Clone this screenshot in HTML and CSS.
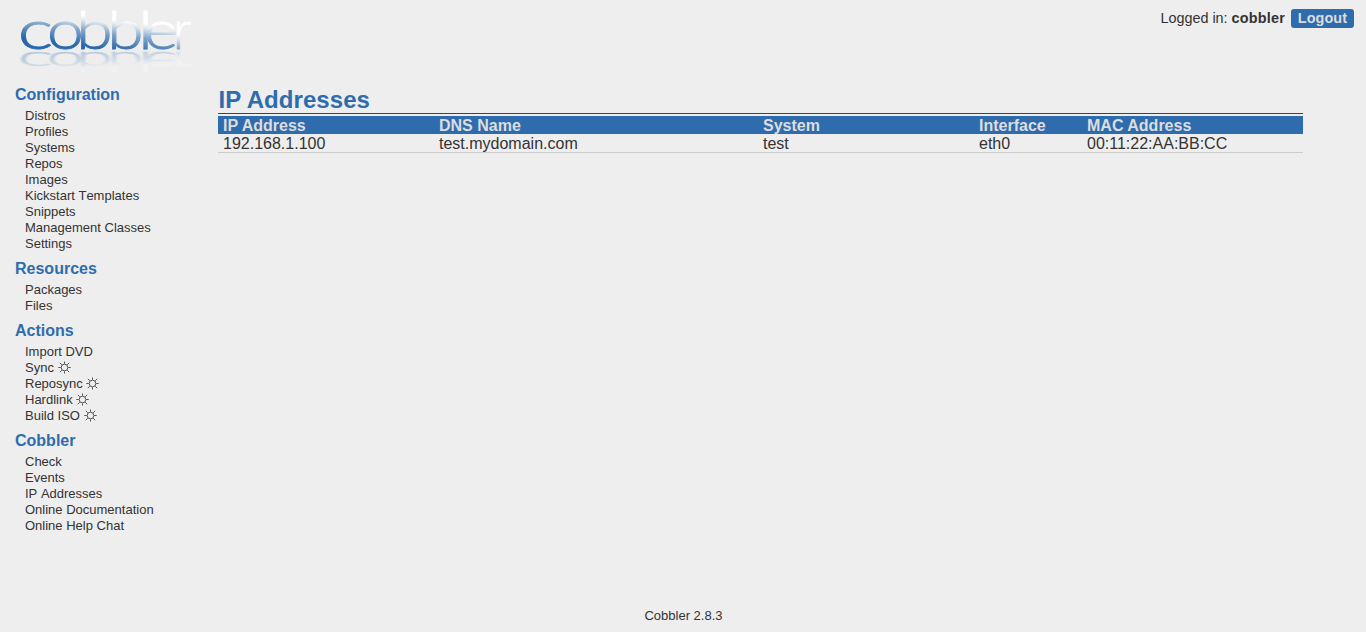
FILE: index.html
```html
<!DOCTYPE html>
<html lang="en">
<head>
<meta charset="utf-8">
<title>Cobbler Web Interface</title>
<link rel="stylesheet" href="styles.css">
</head>
<body>
<div class="page">
  <header class="header">
    <svg class="logo" width="200" height="76" viewBox="0 0 200 76" role="img" aria-label="cobbler">
      <defs>
        <linearGradient id="ink" gradientUnits="userSpaceOnUse" x1="86" y1="-33" x2="81" y2="-2">
          <stop offset="0" stop-color="#fff"/>
          <stop offset=".15" stop-color="#dfe8f1"/>
          <stop offset=".5" stop-color="#7da1c9"/>
          <stop offset="1" stop-color="#2768ac"/>
        </linearGradient>
        <filter id="soft"><feGaussianBlur stdDeviation="1"/></filter>
        <symbol id="gear" viewBox="0 0 13 13">
          <circle cx="6.5" cy="6.5" r="3.3"/>
          <path d="M6.5 .5v2.3M6.5 10.2v2.3M.3 6.5h2.5M10.2 6.5h2.5M1.8 1.8l2 2M9.2 9.2l2 2M11.2 1.8l-2 2M3.8 9.2l-2 2"/>
        </symbol>
      </defs>
      <g id="wordmark" class="wordmark">
        <g transform="translate(0 49) scale(1.34 .94)"><text x="13.2" y="0">c</text></g>
        <g transform="translate(0 49) scale(1.18 .94)"><text y="0" x="39.9 64.6 90.9 117.2 122.1">obble</text></g>
        <g transform="translate(0 49) scale(.92 .94)"><text x="188" y="0">r</text></g>
      </g>
      <use href="#wordmark" class="reflection" transform="translate(0 78) scale(1 -.53)" filter="url(#soft)"/>
    </svg>
    <div class="user">Logged in: <strong class="name">cobbler</strong><a class="logout">Logout</a></div>
  </header>
  <div class="columns">
    <nav class="menu">
      <h2>Configuration</h2>
      <ul><li>Distros</li><li>Profiles</li><li>Systems</li><li>Repos</li><li>Images</li><li>Kickstart Templates</li><li>Snippets</li><li>Management Classes</li><li>Settings</li></ul>
      <h2>Resources</h2>
      <ul><li>Packages</li><li>Files</li></ul>
      <h2>Actions</h2>
      <ul><li>Import DVD</li><li>Sync <svg class="gear"><use href="#gear"/></svg></li><li>Reposync <svg class="gear"><use href="#gear"/></svg></li><li>Hardlink <svg class="gear"><use href="#gear"/></svg></li><li>Build ISO <svg class="gear"><use href="#gear"/></svg></li></ul>
      <h2>Cobbler</h2>
      <ul><li>Check</li><li>Events</li><li>IP Addresses</li><li>Online Documentation</li><li>Online Help Chat</li></ul>
    </nav>
    <main class="content">
      <h1>IP Addresses</h1>
      <table class="hosts">
        <colgroup><col class="ip"><col class="dns"><col class="system"><col class="iface"><col></colgroup>
        <thead><tr><th>IP Address</th><th>DNS Name</th><th>System</th><th>Interface</th><th>MAC Address</th></tr></thead>
        <tbody><tr><td>192.168.1.100</td><td>test.mydomain.com</td><td>test</td><td>eth0</td><td>00:11:22:AA:BB:CC</td></tr></tbody>
      </table>
    </main>
  </div>
  <footer class="footer">Cobbler 2.8.3</footer>
</div>
</body>
</html>
```
FILE: styles.css
```css
* { box-sizing: border-box; }
body { margin: 0; background: #eee; color: #333; font-family: "Liberation Sans", Arial, sans-serif; }
.page { height: 632px; display: flex; flex-direction: column; overflow: hidden; }
.header { height: 80px; display: flex; justify-content: space-between; align-items: flex-start; padding-right: 12px; }
.logo { display: block; }
.wordmark { font-family: Lato, sans-serif; font-size: 56px; font-weight: 300; fill: url(#ink); stroke: url(#ink); stroke-width: .9; }
.reflection { opacity: .28; }
.user { display: flex; align-items: center; margin-top: 9px; font-size: 14.4px; line-height: 19px; white-space: pre; }
.name { letter-spacing: .2px; }
.logout { margin-left: 6px; width: 63px; height: 19px; border-radius: 3px; background: #2f6cad; color: #ddd; font-weight: bold; text-align: center; letter-spacing: .1px; }
.columns { flex: 1; display: flex; }
.menu { width: 218px; padding: 6px 0 0 15px; font-kerning: none; }
.menu h2 { margin: 0; height: 22px; font-size: 16px; line-height: 18px; color: #2f6cad; }
.menu ul { list-style: none; margin: 0 0 8px; padding: 0 0 0 10px; font-size: 13px; line-height: 16px; }
.menu li { height: 16px; }
.gear { width: 13px; height: 13px; vertical-align: -2px; fill: none; stroke: #444; stroke-width: .9; }
.content { width: 1085px; padding-top: 6px; }
h1 { margin: 0; height: 27px; padding-left: .5px; font-size: 24px; line-height: 28px; letter-spacing: .06px; color: #2f6cad; }
.hosts { width: 1085px; table-layout: fixed; border-collapse: separate; border-spacing: 0; border-top: 1px solid #444; padding-top: 2px; font-size: 16px; line-height: 17px; }
.ip { width: 216px; }
.dns { width: 324px; }
.system { width: 216px; }
.iface { width: 108px; }
.hosts th, .hosts td { padding: 1px 0 0 5px; text-align: left; }
.hosts th { background: #2f6cad; color: #ddd; }
.hosts td { border-bottom: 1px solid #ccc; }
.footer { height: 24px; padding-left: 1px; text-align: center; font-size: 13px; line-height: 16px; }
```
